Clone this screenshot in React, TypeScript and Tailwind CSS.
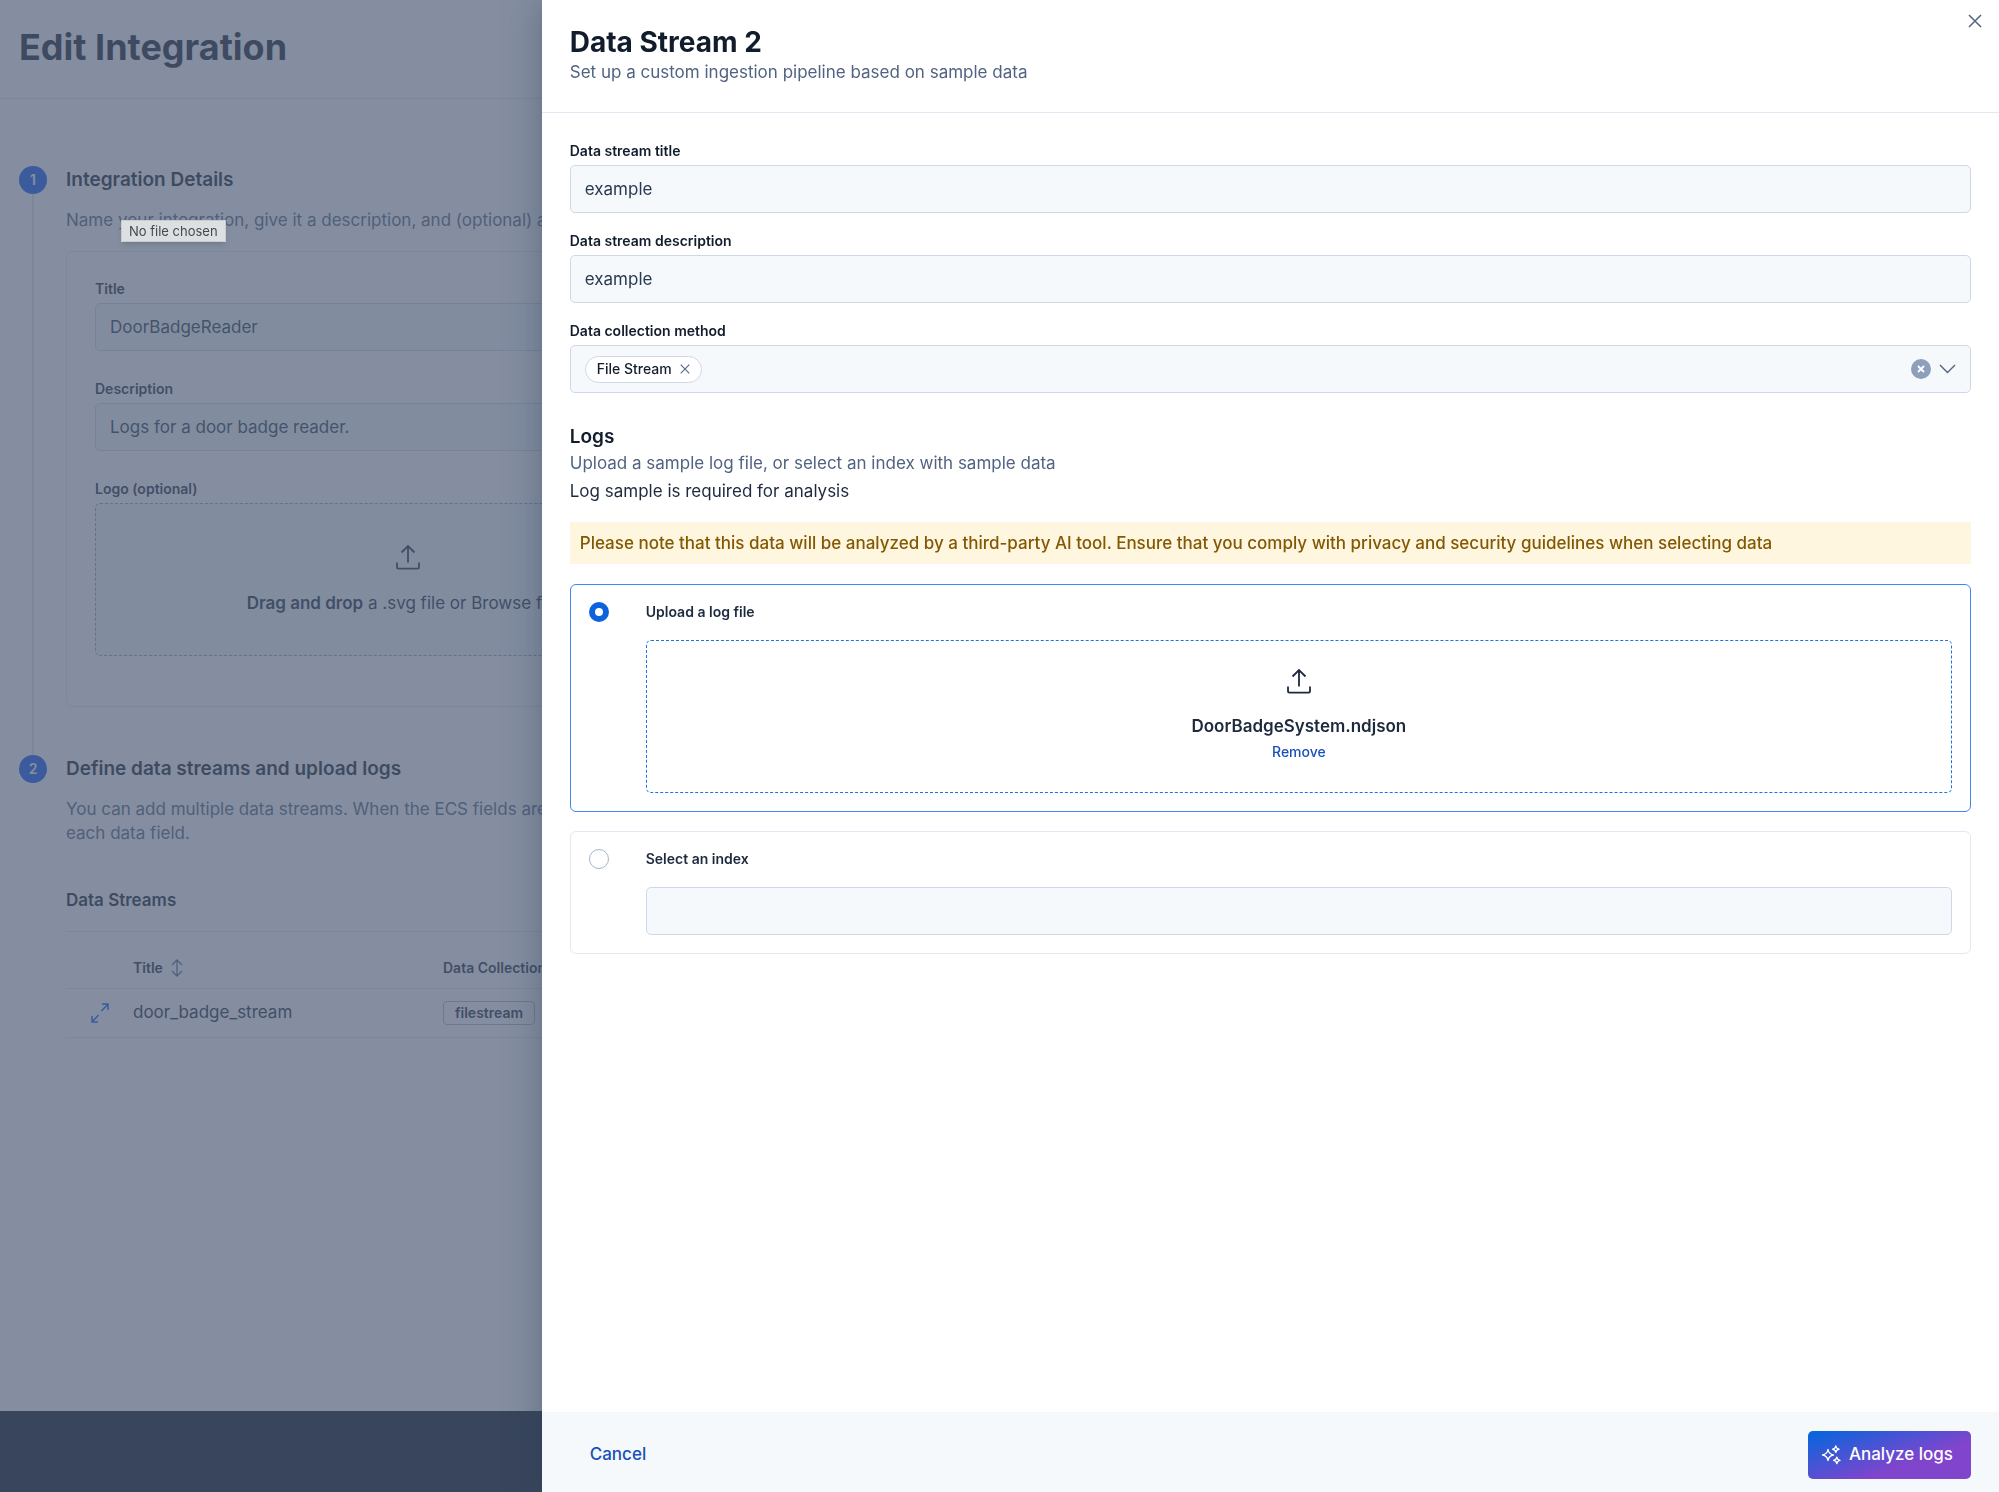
import type { ReactNode } from "react";

const inputClass =
    "block w-full h-12 rounded-[5px] border border-[#cfd8e7] bg-[#f5f9fc] px-3.5 text-[17px] text-[#2b394f] outline-none";

function UploadIcon() {
    return (
        <svg width="24" height="26" viewBox="0 0 24 26" fill="none" stroke="currentColor" strokeWidth="1.8" aria-hidden="true">
            <path d="M12 18.5V2M5.5 8.5 12 2l6.5 6.5" />
            <path d="M1 18.5V23a1.6 1.6 0 0 0 1.6 1.6h18.8A1.6 1.6 0 0 0 23 23v-4.5" />
        </svg>
    );
}

function CrossIcon({ size }: { size: number }) {
    return (
        <svg width={size} height={size} viewBox="0 0 14 14" fill="none" stroke="currentColor" strokeWidth="1.5" aria-hidden="true">
            <path d="M1 1l12 12M13 1 1 13" />
        </svg>
    );
}

function SortIcon() {
    return (
        <svg width="12" height="18" viewBox="0 0 12 18" fill="none" stroke="currentColor" strokeWidth="1.3" aria-hidden="true">
            <path d="M6 1v16M1 6l5-5 5 5M1 12l5 5 5-5" />
        </svg>
    );
}

function ExpandIcon() {
    return (
        <svg width="18" height="20" viewBox="0 0 18 20" fill="none" stroke="currentColor" strokeWidth="1.5" aria-hidden="true">
            <path d="M11 1h6v6M17 1l-6.500 7M7 19H1v-6M1 19l6.500-7" />
        </svg>
    );
}

function SparklesIcon() {
    return (
        <svg width="20" height="20" viewBox="0 0 20 20" fill="none" stroke="currentColor" strokeWidth="1.4" strokeLinejoin="round" aria-hidden="true">
            <path d="M7 4.500c.6 3.500 2 4.900 5.500 5.500-3.500.6-4.900 2-5.500 5.500-.6-3.500-2-4.900-5.500-5.500 3.500-.6 4.900-2 5.500-5.500Z" />
            <path d="M14.800 1c.3 2 1.200 2.900 3.200 3.200-2 .3-2.900 1.200-3.200 3.200-.3-2-1.200-2.900-3.200-3.200 2-.3 2.900-1.200 3.200-3.200Z" />
            <path d="M15.800 12.200c.3 2 1.200 2.900 3.200 3.200-2 .3-2.900 1.200-3.200 3.200-.3-2-1.200-2.900-3.200-3.200 2-.3 2.900-1.200 3.200-3.200Z" />
        </svg>
    );
}

function Step({ number, title, last, children }: { number: number; title: string; last?: boolean; children: ReactNode }) {
    return (
        <li className="flex gap-[19px]">
            <div className="flex flex-col items-center w-7 shrink-0">
                <span className="flex size-7 items-center justify-center rounded-full bg-[#0b56f0] text-sm font-semibold text-white">{number}</span>
                {!last && <span className="w-0.5 flex-1 bg-[#e3e8f2]" />}
            </div>
            <div className="w-[684px] shrink-0">
                <h2 className="text-[19px] leading-7 font-semibold text-[#111c2c]">{title}</h2>
                {children}
            </div>
        </li>
    );
}

function EditPage() {
    return (
        <div className="flex min-h-screen flex-col overflow-hidden bg-white text-[17px] text-[#1d2a3e]">
            <header className="flex h-[99px] items-center border-b border-[#e3e8f2] px-[19px] pb-1">
                <h1 className="text-[36px] font-bold text-[#111c2c]">Edit Integration</h1>
            </header>
            <main className="flex-1 px-[19px] pt-[67px]">
                <ol>
                    <Step number={1} title="Integration Details">
                        <p className="mt-3.5 leading-6 whitespace-nowrap text-[#516381]">
                            Name your integration, give it a description, and (optional) add a logo
                        </p>
                        <div className="mt-[19px] mb-12 rounded-md border border-[#e3e8f2] px-7 pt-[27px] pb-[50px]">
                            <label htmlFor="title" className="block text-sm leading-5 font-semibold">Title</label>
                            <input id="title" className={inputClass + " mt-1"} defaultValue="DoorBadgeReader" />
                            <label htmlFor="description" className="mt-7 block text-sm leading-5 font-semibold">Description</label>
                            <input id="description" className={inputClass + " mt-1"} defaultValue="Logs for a door badge reader." />
                            <label htmlFor="logo" className="mt-7 block text-sm leading-5 font-semibold">Logo (optional)</label>
                            <label className="mt-1 flex h-[153px] flex-col items-center rounded-[5px] border border-dashed border-[#8e9fbc] bg-[#f5f9fc] pt-10">
                                <UploadIcon />
                                <span className="mt-[21px] leading-6"><strong className="font-semibold">Drag and drop</strong> a .svg file or Browse files</span>
                                <input id="logo" type="file" className="sr-only" />
                            </label>
                        </div>
                    </Step>
                    <Step number={2} title="Define data streams and upload logs" last>
                        <p className="mt-3.5 leading-6 whitespace-nowrap text-[#516381]">
                            You can add multiple data streams. When the ECS fields are
                            <br />
                            each data field.
                        </p>
                        <h3 className="mt-[43px] mb-[19px] leading-6 font-semibold text-[#111c2c]">Data Streams</h3>
                        <table className="w-full border-y border-[#e3e8f2] text-left">
                            <thead>
                                <tr className="h-[57px] border-b border-[#e3e8f2] text-sm">
                                    <th className="w-[67px]" aria-label="Expand" />
                                    <th className="w-[310px] pt-4 font-semibold">
                                        <button className="flex items-center gap-2">Title <span className="text-[#516381]"><SortIcon /></span></button>
                                    </th>
                                    <th className="pt-4 font-semibold">Data Collection Method</th>
                                </tr>
                            </thead>
                            <tbody>
                                <tr className="h-[49px]">
                                    <td className="pl-[25px]"><button className="flex text-[#0b56f0]" aria-label="Expand row"><ExpandIcon /></button></td>
                                    <td>door_badge_stream</td>
                                    <td>
                                        <span className="flex h-6 w-fit items-center rounded-[4px] border border-[#aab8cf] px-[11px] text-sm font-semibold">filestream</span>
                                    </td>
                                </tr>
                            </tbody>
                        </table>
                    </Step>
                </ol>
            </main>
            <footer className="h-[81px] bg-[#000c1c]" />
        </div>
    );
}

function TextField({ id, label, value }: { id: string; label: string; value: string }) {
    return (
        <div>
            <label htmlFor={id} className="block text-sm leading-5 font-semibold text-[#111c2c]">{label}</label>
            <input id={id} className={inputClass + " mt-1"} defaultValue={value} />
        </div>
    );
}

function Flyout() {
    return (
        <section
            role="dialog"
            aria-labelledby="flyout-title"
            className="fixed inset-y-0 right-0 flex w-[72.9%] flex-col bg-white text-[17px] text-[#1d2a3e] shadow-[0_0_36px_rgba(40,55,85,0.4)]"
        >
            <header className="h-[113px] border-b border-[#e3e8f2] px-7 pt-6">
                <h2 id="flyout-title" className="text-[28px] leading-9 font-bold text-[#111c2c]">Data Stream 2</h2>
                <p className="leading-6 text-[#516381]">Set up a custom ingestion pipeline based on sample data</p>
                <button className="absolute top-3.5 right-[17px] text-[#516381]" aria-label="Close"><CrossIcon size={14} /></button>
            </header>

            <div className="flex-1 overflow-hidden px-7 pt-7">
                <div className="flex flex-col gap-[18px]">
                    <TextField id="stream-title" label="Data stream title" value="example" />
                    <TextField id="stream-description" label="Data stream description" value="example" />
                    <div>
                        <label htmlFor="method" className="block text-sm leading-5 font-semibold text-[#111c2c]">Data collection method</label>
                        <div className="mt-1 flex h-12 items-center rounded-[5px] border border-[#cfd8e7] bg-[#f5f9fc] px-3.5">
                            <span className="flex h-[27px] items-center gap-2 rounded-full border border-[#cfd8e7] bg-white px-[11px] text-sm font-medium text-[#111c2c]">
                                File Stream
                                <button className="text-[#516381]" aria-label="Remove File Stream"><CrossIcon size={10} /></button>
                            </span>
                            <input id="method" role="combobox" aria-expanded="false" aria-controls="method-options" className="h-full min-w-0 flex-1 px-2 outline-none" />
                            <button className="flex size-5 items-center justify-center rounded-full bg-[#8e9fbc] text-white" aria-label="Clear">
                                <svg width="8" height="8" viewBox="0 0 8 8" stroke="currentColor" strokeWidth="1.8" aria-hidden="true"><path d="M1 1l6 6M7 1 1 7" /></svg>
                            </button>
                            <button className="ml-2 text-[#516381]" aria-label="Open options">
                                <svg width="17" height="10" viewBox="0 0 17 10" fill="none" stroke="currentColor" strokeWidth="1.4" aria-hidden="true"><path d="m1 1 7.500 7.500L16 1" /></svg>
                            </button>
                        </div>
                    </div>
                </div>

                <h3 className="mt-8 text-[19px] leading-6 font-semibold text-[#111c2c]">Logs</h3>
                <p className="mt-0.5 leading-6 text-[#516381]">Upload a sample log file, or select an index with sample data</p>
                <p className="mt-1 leading-6">Log sample is required for analysis</p>
                <p className="mt-[19px] bg-[#fff6e0] px-2.5 py-[9px] leading-6 font-medium text-[#825803]">
                    Please note that this data will be analyzed by a third-party AI tool. Ensure that you comply with privacy and security guidelines when selecting data
                </p>

                <div className="mt-5 rounded-md border border-[#3d87ee] px-[18px] pt-[17px] pb-[18px]">
                    <div className="flex items-center">
                        <input id="upload" type="radio" name="source" defaultChecked className="size-5 appearance-none rounded-full border-[#0b64dd] checked:border-[6px]" />
                        <label htmlFor="upload" className="ml-[37px] text-sm leading-5 font-semibold">Upload a log file</label>
                    </div>
                    <div className="mt-[18px] ml-[57px] flex h-[153px] flex-col items-center rounded-[5px] border border-dashed border-[#1d72e8] pt-[27px]">
                        <UploadIcon />
                        <strong className="mt-5 leading-6 font-semibold">DoorBadgeSystem.ndjson</strong>
                        <button className="mt-1 text-sm leading-5 font-medium text-[#1750ba]">Remove</button>
                    </div>
                </div>

                <div className="mt-[19px] rounded-md border border-[#e3e8f2] px-[18px] pt-[17px] pb-[18px]">
                    <div className="flex items-center">
                        <input id="select" type="radio" name="source" className="size-5 appearance-none rounded-full border border-[#a3b4d1]" />
                        <label htmlFor="select" className="ml-[37px] text-sm leading-5 font-semibold">Select an index</label>
                    </div>
                    <div className="mt-[18px] ml-[57px]">
                        <select className={inputClass + " appearance-none"} aria-label="Index" />
                    </div>
                </div>
            </div>

            <footer className="flex h-20 items-center justify-between bg-[#f5f9fc] pt-[6px] pr-7 pl-12">
                <button className="font-medium text-[#1750ba]">Cancel</button>
                <button className="flex h-12 items-center gap-2 rounded-[5px] bg-linear-[160deg] from-[#0b64dd] from-5% to-[#8144cc] to-65% pr-[18px] pl-[13px] font-medium text-white">
                    <SparklesIcon />
                    Analyze logs
                </button>
            </footer>
        </section>
    );
}

export default function App() {
    return (
        <div className="font-['Inter','Liberation_Sans',sans-serif]">
            <EditPage />
            <div className="fixed inset-0 bg-[#505e77]/70" />
            <div role="tooltip" className="absolute top-[220px] left-[121px] border border-[#c9ccd0] bg-[#dde0e3] px-[7px] text-[13px] leading-5 text-[#45484d] shadow-md">
                No file chosen
            </div>
            <Flyout />
        </div>
    );
}
